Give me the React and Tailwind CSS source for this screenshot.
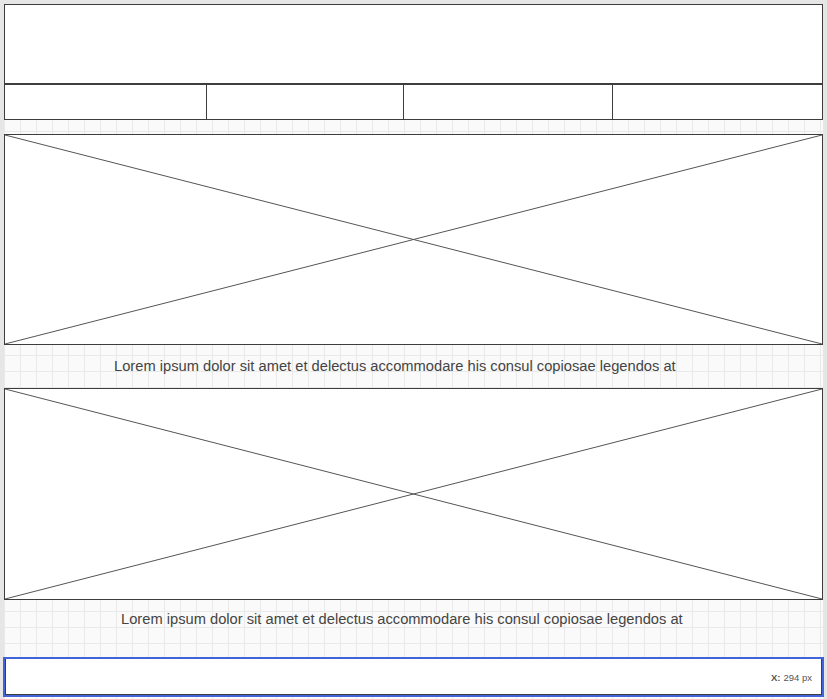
import React from "react";

function XBox({ h }) {
  return (
    <div className={`relative w-full ${h} border border-[#3d3d3d] bg-white`}>
      <svg className="absolute inset-0 w-full h-full" preserveAspectRatio="none" viewBox="0 0 100 100">
        <line x1="0" y1="0" x2="100" y2="100" stroke="#555" strokeWidth="1" vectorEffect="non-scaling-stroke" />
        <line x1="100" y1="0" x2="0" y2="100" stroke="#555" strokeWidth="1" vectorEffect="non-scaling-stroke" />
      </svg>
    </div>
  );
}

export default function App() {
  const text = "Lorem ipsum dolor sit amet et delectus accommodare his consul copiosae legendos at";
  return (
    <div className="w-[827px] h-[699px] bg-[#e6e6e6] pt-[4px] pl-[4px] overflow-hidden" style={{ fontFamily: '"Liberation Sans", Arial, sans-serif' }}>
      <div className="w-[819px] h-[695px] flex flex-col bg-[#fafafa] bg-[linear-gradient(to_right,#e9e9e9_1px,transparent_1px),linear-gradient(to_bottom,#e9e9e9_1px,transparent_1px)] bg-[size:16px_16px] bg-[position:0px_-1px]">
        <div className="h-[80px] border border-[#3d3d3d] bg-white" />
        <div className="h-[36px] flex border border-[#3d3d3d] bg-white">
          <div className="w-[201px]" />
          <div className="w-[197px] border-l border-[#3d3d3d]" />
          <div className="w-[209px] border-l border-[#3d3d3d]" />
          <div className="flex-1 border-l border-[#3d3d3d]" />
        </div>
        <div className="h-[14px]" />
        <XBox h="h-[211px]" />
        <div className="h-[43px] flex items-center pl-[110px] text-[14.7px] text-[#444]">{text}</div>
        <XBox h="h-[212px]" />
        <div className="h-[57px] pt-[8px] pl-[117px] text-[14.7px] text-[#444]">{text}</div>
        <div className="h-[40px] -mx-[1px] border-2 border-[#4363d8]">
          <div className="h-full border-l border-r border-b border-[#3d3d3d] bg-white flex items-center justify-end pr-[9px] pt-[3px] text-[9.5px] text-[#555]">
            <span className="font-bold">X:</span>
            <span className="ml-[3px]">294 px</span>
          </div>
        </div>
      </div>
    </div>
  );
}
